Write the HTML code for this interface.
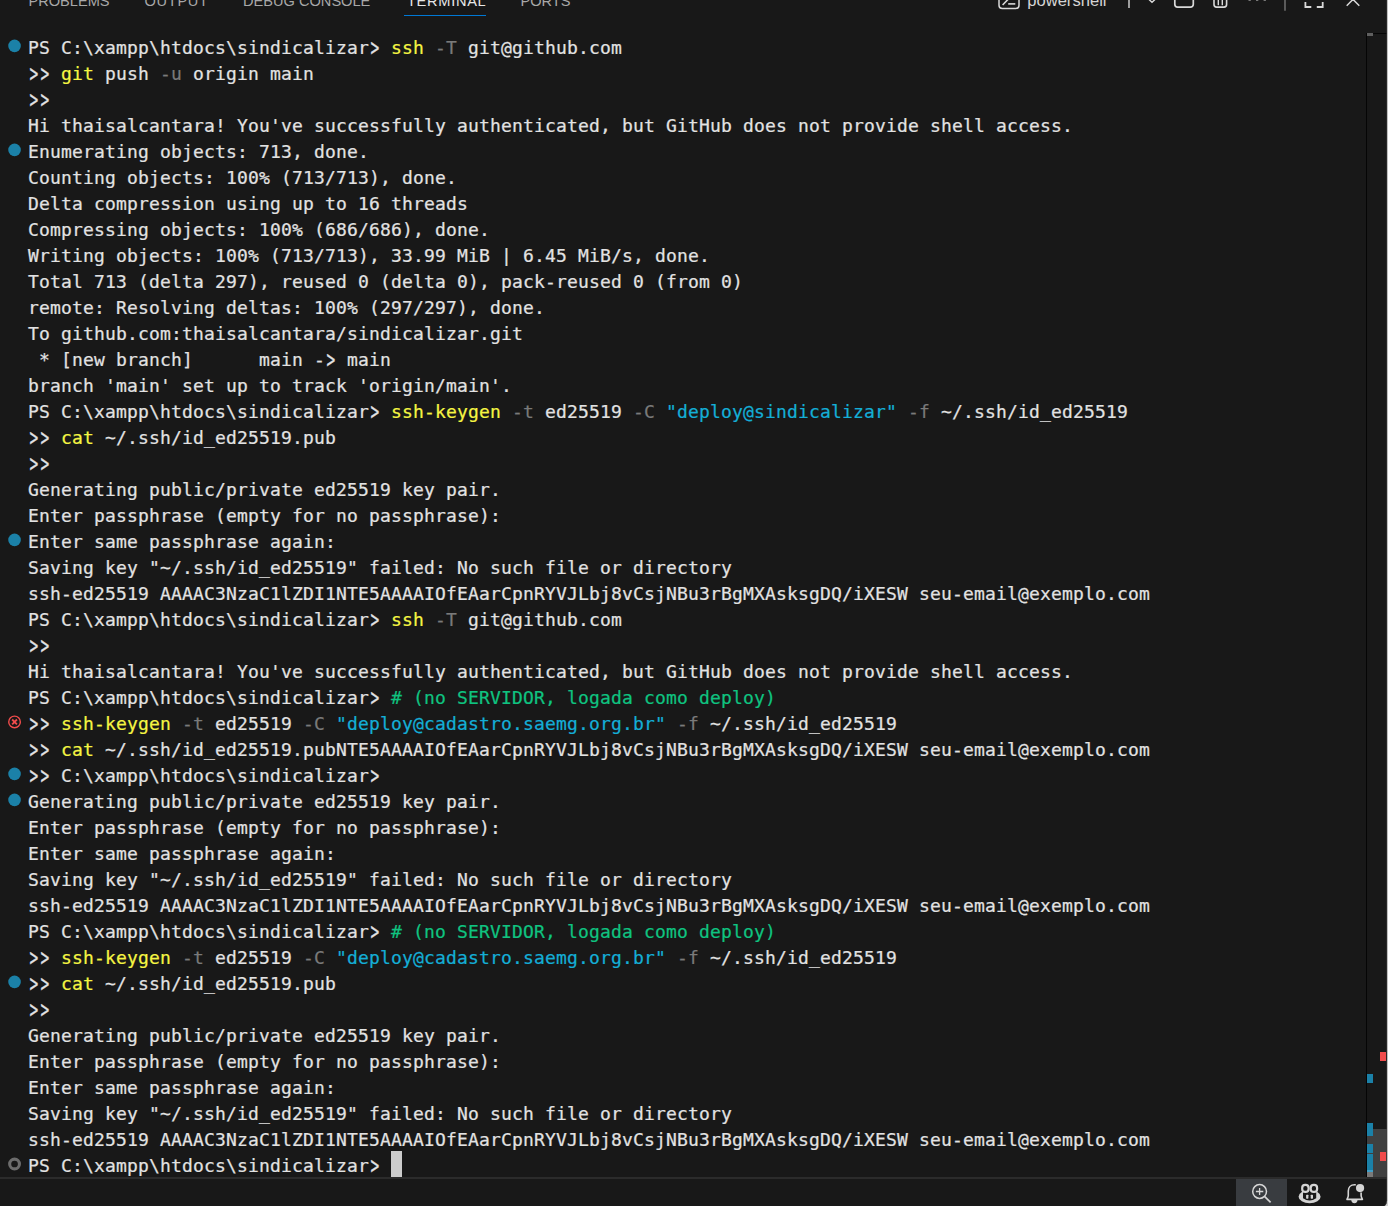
<!DOCTYPE html>
<html lang="pt-BR">
<head>
<meta charset="utf-8">
<title>Terminal - powershell</title>
<style>
html,body{margin:0;padding:0;background:#181818;}
body{width:1388px;height:1206px;position:relative;overflow:hidden;font-family:"Liberation Sans",sans-serif;}
#term{position:absolute;left:28px;top:33px;-webkit-text-stroke:0.22px;width:1338px;color:#e2e2e2;font-family:"DejaVu Sans Mono","Liberation Mono",monospace;font-size:18px;letter-spacing:0.1631px;line-height:30px;font-kerning:none;font-variant-ligatures:none;}
.row{height:26px;position:relative;white-space:pre;}
.gt{display:inline-block;width:11px;letter-spacing:0;transform:translate(0.500px,-0.400px) scale(0.800,1.350);transform-origin:50% 51.700%;}
.y{color:#f5f543;} .g{color:#7a7a7a;} .c{color:#14aed6;} .gr{color:#0fc380;}
.dot{position:absolute;left:-19.8px;top:6.7px;width:12.6px;height:12.6px;border-radius:50%;background:#1b81a8;}
.ring{position:absolute;left:-19.7px;top:6.8px;width:6.8px;height:6.8px;border:2.8px solid #6a6a6a;border-radius:50%;}
.deco{position:absolute;left:-22px;top:5px;}
.cursor{position:absolute;left:363px;top:0;width:11px;height:26px;background:#cccccc;}
/* tabs */
#tabs{position:absolute;left:0;top:0;width:1388px;height:30px;}
.tab{position:absolute;top:-8.3px;font-size:14.6px;line-height:18px;color:#a8a8a8;white-space:nowrap;}
.tab.active{color:#e7e7e7;}
#uline{position:absolute;left:404px;top:14.6px;width:82px;height:1.4px;background:#0078d4;}
#ps{position:absolute;left:1027.2px;top:-9.3px;font-size:16.6px;line-height:20px;color:#d4d4d4;white-space:nowrap;}
#icons{position:absolute;left:0;top:0;}
/* scrollbar / overview ruler */
#ruler{position:absolute;left:1366px;top:33px;width:21px;height:1144px;border-left:1px solid #050505;border-top:1px solid #050505;box-sizing:border-box;}
.mk{position:absolute;}
#slider{position:absolute;left:1367px;top:1129px;width:20px;height:48px;background:#404040;}
#sline{position:absolute;left:0;top:1177px;width:1388px;height:2px;background:#2b2b2b;}
#zoombtn{position:absolute;left:1236px;top:1179px;width:51px;height:27px;background:#393c40;}
</style>
</head>
<body>
<div id="tabs">
<span class="tab" style="left:28.5px">PROBLEMS</span>
<span class="tab" style="left:144.5px;letter-spacing:0.7px">OUTPUT</span>
<span class="tab" style="left:243px">DEBUG CONSOLE</span>
<span class="tab active" style="left:407px;letter-spacing:0.7px">TERMINAL</span>
<span class="tab" style="left:520.5px">PORTS</span>
<div id="uline"></div>
<span id="ps">powershell</span>
<svg id="icons" width="1388" height="30" viewBox="0 0 1388 30" fill="none" stroke="#d8d8d8" stroke-width="1.5">
<rect x="999" y="-12" width="20" height="20.5" rx="3.2"/>
<path d="M1002.6 5L1008 -0.6L1002.6 -6.200" stroke-width="1.6"/><path d="M1008.2 3.900H1015.300" stroke-width="1.6"/>
<path d="M1129 -10V8" stroke-width="1.4"/>
<path d="M1146 -3.200L1152 2.200L1158 -3.200" stroke-width="1.4"/>
<rect x="1174.800" y="-12" width="18.500" height="19.100" rx="2.800" stroke-width="1.700"/>
<path d="M1214 -10V4.500Q1214 7.100 1216.600 7.100H1224Q1226.600 7.100 1226.600 4.500V-10" stroke-width="1.600"/><path d="M1218.300 -8V5.200M1222.300 -8V5.200" stroke-width="1.400"/>
<path d="M1248.500 -0.300h2.300M1256 -0.300h2.300M1263.600 -0.300h2.300" stroke-width="1.800"/>
<path d="M1285 -5V10.800" stroke="#636363" stroke-width="1.800"/>
<path d="M1305.400 2V7H1311.300M1316.800 7H1322.700V2" stroke-width="1.800"/>
<path d="M1343 -10.600L1359.300 5.700M1363 -10.600L1346.700 5.700" stroke-width="1.500"/>
</svg>
</div>
<div id="term">
<div class="row"><svg class="deco" width="16" height="16" viewBox="0 0 16 16"><circle cx="8.550" cy="7.900" r="6.300" fill="#1b81a8"/></svg>PS C:\xampp\htdocs\sindicalizar<span class="gt">&gt;</span> <span class="y">ssh</span> <span class="g">-T</span> git@github.com</div>
<div class="row"><span class="gt">&gt;</span><span class="gt">&gt;</span> <span class="y">git</span> push <span class="g">-u</span> origin main</div>
<div class="row"><span class="gt">&gt;</span><span class="gt">&gt;</span></div>
<div class="row">Hi thaisalcantara! You've successfully authenticated, but GitHub does not provide shell access.</div>
<div class="row"><svg class="deco" width="16" height="16" viewBox="0 0 16 16"><circle cx="8.550" cy="7.900" r="6.300" fill="#1b81a8"/></svg>Enumerating objects: 713, done.</div>
<div class="row">Counting objects: 100% (713/713), done.</div>
<div class="row">Delta compression using up to 16 threads</div>
<div class="row">Compressing objects: 100% (686/686), done.</div>
<div class="row">Writing objects: 100% (713/713), 33.99 MiB | 6.45 MiB/s, done.</div>
<div class="row">Total 713 (delta 297), reused 0 (delta 0), pack-reused 0 (from 0)</div>
<div class="row">remote: Resolving deltas: 100% (297/297), done.</div>
<div class="row">To github.com:thaisalcantara/sindicalizar.git</div>
<div class="row"> * [new branch]      main -<span class="gt">&gt;</span> main</div>
<div class="row">branch 'main' set up to track 'origin/main'.</div>
<div class="row">PS C:\xampp\htdocs\sindicalizar<span class="gt">&gt;</span> <span class="y">ssh-keygen</span> <span class="g">-t</span> ed25519 <span class="g">-C</span> <span class="c">"deploy@sindicalizar"</span> <span class="g">-f</span> ~/.ssh/id_ed25519</div>
<div class="row"><span class="gt">&gt;</span><span class="gt">&gt;</span> <span class="y">cat</span> ~/.ssh/id_ed25519.pub</div>
<div class="row"><span class="gt">&gt;</span><span class="gt">&gt;</span></div>
<div class="row">Generating public/private ed25519 key pair.</div>
<div class="row">Enter passphrase (empty for no passphrase):</div>
<div class="row"><svg class="deco" width="16" height="16" viewBox="0 0 16 16"><circle cx="8.550" cy="7.900" r="6.300" fill="#1b81a8"/></svg>Enter same passphrase again:</div>
<div class="row">Saving key "~/.ssh/id_ed25519" failed: No such file or directory</div>
<div class="row">ssh-ed25519 AAAAC3NzaC1lZDI1NTE5AAAAIOfEAarCpnRYVJLbj8vCsjNBu3rBgMXAsksgDQ/iXESW seu-email@exemplo.com</div>
<div class="row">PS C:\xampp\htdocs\sindicalizar<span class="gt">&gt;</span> <span class="y">ssh</span> <span class="g">-T</span> git@github.com</div>
<div class="row"><span class="gt">&gt;</span><span class="gt">&gt;</span></div>
<div class="row">Hi thaisalcantara! You've successfully authenticated, but GitHub does not provide shell access.</div>
<div class="row">PS C:\xampp\htdocs\sindicalizar<span class="gt">&gt;</span> <span class="gr"># (no SERVIDOR, logada como deploy)</span></div>
<div class="row"><svg class="deco" width="16" height="16" viewBox="0 0 16 16"><circle cx="8.550" cy="7.900" r="5.800" fill="none" stroke="#f14c4c" stroke-width="1.400"/><path d="M6.150 5.500L10.950 10.300M10.950 5.500L6.150 10.300" stroke="#f14c4c" stroke-width="1.800"/></svg><span class="gt">&gt;</span><span class="gt">&gt;</span> <span class="y">ssh-keygen</span> <span class="g">-t</span> ed25519 <span class="g">-C</span> <span class="c">"deploy@cadastro.saemg.org.br"</span> <span class="g">-f</span> ~/.ssh/id_ed25519</div>
<div class="row"><span class="gt">&gt;</span><span class="gt">&gt;</span> <span class="y">cat</span> ~/.ssh/id_ed25519.pubNTE5AAAAIOfEAarCpnRYVJLbj8vCsjNBu3rBgMXAsksgDQ/iXESW seu-email@exemplo.com</div>
<div class="row"><svg class="deco" width="16" height="16" viewBox="0 0 16 16"><circle cx="8.550" cy="7.900" r="6.300" fill="#1b81a8"/></svg><span class="gt">&gt;</span><span class="gt">&gt;</span> C:\xampp\htdocs\sindicalizar<span class="gt">&gt;</span></div>
<div class="row"><svg class="deco" width="16" height="16" viewBox="0 0 16 16"><circle cx="8.550" cy="7.900" r="6.300" fill="#1b81a8"/></svg>Generating public/private ed25519 key pair.</div>
<div class="row">Enter passphrase (empty for no passphrase):</div>
<div class="row">Enter same passphrase again:</div>
<div class="row">Saving key "~/.ssh/id_ed25519" failed: No such file or directory</div>
<div class="row">ssh-ed25519 AAAAC3NzaC1lZDI1NTE5AAAAIOfEAarCpnRYVJLbj8vCsjNBu3rBgMXAsksgDQ/iXESW seu-email@exemplo.com</div>
<div class="row">PS C:\xampp\htdocs\sindicalizar<span class="gt">&gt;</span> <span class="gr"># (no SERVIDOR, logada como deploy)</span></div>
<div class="row"><span class="gt">&gt;</span><span class="gt">&gt;</span> <span class="y">ssh-keygen</span> <span class="g">-t</span> ed25519 <span class="g">-C</span> <span class="c">"deploy@cadastro.saemg.org.br"</span> <span class="g">-f</span> ~/.ssh/id_ed25519</div>
<div class="row"><svg class="deco" width="16" height="16" viewBox="0 0 16 16"><circle cx="8.550" cy="7.900" r="6.300" fill="#1b81a8"/></svg><span class="gt">&gt;</span><span class="gt">&gt;</span> <span class="y">cat</span> ~/.ssh/id_ed25519.pub</div>
<div class="row"><span class="gt">&gt;</span><span class="gt">&gt;</span></div>
<div class="row">Generating public/private ed25519 key pair.</div>
<div class="row">Enter passphrase (empty for no passphrase):</div>
<div class="row">Enter same passphrase again:</div>
<div class="row">Saving key "~/.ssh/id_ed25519" failed: No such file or directory</div>
<div class="row">ssh-ed25519 AAAAC3NzaC1lZDI1NTE5AAAAIOfEAarCpnRYVJLbj8vCsjNBu3rBgMXAsksgDQ/iXESW seu-email@exemplo.com</div>
<div class="row"><svg class="deco" width="16" height="16" viewBox="0 0 16 16"><circle cx="8.550" cy="8" r="4.900" fill="none" stroke="#6c6c6c" stroke-width="3.100"/></svg>PS C:\xampp\htdocs\sindicalizar<span class="gt">&gt;</span> <b class="cursor"></b></div>
</div>
<div id="slider"></div>
<div id="ruler">
<i class="mk" style="left:0;top:-1px;width:6px;height:3px;background:#5f5f5f"></i>
<i class="mk" style="left:13px;top:1018px;width:6px;height:9px;background:#f14c4c"></i>
<i class="mk" style="left:0;top:1040px;width:6px;height:9px;background:#1b81a8"></i>
<i class="mk" style="left:0;top:1089px;width:6px;height:13px;background:#1b81a8"></i>
<i class="mk" style="left:0;top:1110px;width:6px;height:9px;background:#1b81a8"></i>
<i class="mk" style="left:0;top:1120px;width:6px;height:16px;background:#1b81a8"></i>
<i class="mk" style="left:0;top:1136px;width:6px;height:2px;background:#3f9fc8"></i>
<i class="mk" style="left:0;top:1138px;width:6px;height:5px;background:#7a7a7a"></i>
<i class="mk" style="left:13px;top:1118px;width:6px;height:9px;background:#f14c4c"></i>
</div>
<div id="sline"></div>
<div id="zoombtn"></div>
<svg id="sicons" style="position:absolute;left:1228px;top:1178px" width="160" height="28" viewBox="0 0 160 28" fill="none" stroke="#d6d6d6" stroke-width="1.5">
<circle cx="31.600" cy="13.500" r="6.900"/><path d="M36.500 18.400L42.600 24.300" stroke-width="1.700"/><path d="M27.900 13.500H35.300M31.600 10.100V17" stroke-width="1.300"/>
<g stroke="none" fill="#d4d4d4">
<ellipse cx="81.600" cy="18.700" rx="11" ry="6.500"/>
<path d="M75 12V20.200Q81.600 25 88.200 20.200V12Z" fill="#181818"/>
<rect x="78.100" y="16.700" width="2.300" height="4" rx="0.600"/><rect x="82.700" y="16.700" width="2.300" height="4" rx="0.600"/>
</g>
<rect x="74.200" y="6.900" width="6.400" height="7" rx="3" fill="#181818" stroke="#d4d4d4" stroke-width="2.200"/>
<rect x="82.700" y="6.900" width="6.400" height="7" rx="3" fill="#181818" stroke="#d4d4d4" stroke-width="2.200"/>
<path d="M127.800 6.800H126.600C122.800 6.800 120.300 9.500 120.300 12.900V17.400C120.300 18.700 119.600 20 119 21.400H134.400C133.800 20 133.100 18.700 133.100 17.400V14.400" stroke-width="1.600" stroke-linejoin="round"/>
<path d="M123.300 22.100a3.100 3.100 0 0 0 6.200 0z" fill="#d4d4d4" stroke="none"/>
<circle cx="132.060" cy="10.100" r="4.100" fill="#d4d4d4" stroke="none"/>
</svg>
<svg id="edge" style="position:absolute;left:1378px;top:0" width="10" height="1206" viewBox="1378 0 10 1206"><path d="M1387 0V1200.400A8 8 0 0 1 1384.700 1206H1388V0Z" fill="#d2d2d2"/><path d="M1386.700 0V1200.400A8 8 0 0 1 1384.400 1206" fill="none" stroke="#3c3c3c" stroke-width="0.600"/></svg>
</body>
</html>
